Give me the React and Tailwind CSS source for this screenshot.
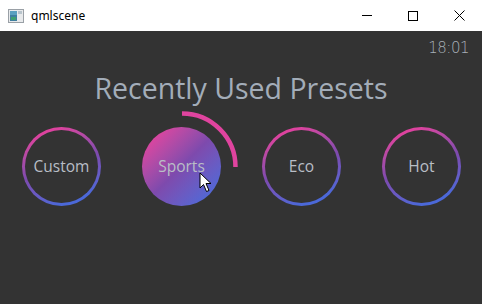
import React from 'react';

const presets = ['Custom', 'Sports', 'Eco', 'Hot'];

function AppIcon() {
  return (
    <svg width="16" height="14" viewBox="0 0 16 14">
      <rect x="0.5" y="0.5" width="15" height="13" fill="#e8eaec" stroke="#9aa0a6" />
      <rect x="2" y="2" width="7" height="10" fill="#3f7f9f" />
      <rect x="2" y="2" width="7" height="4" fill="#5aa0c0" />
      <rect x="3" y="8" width="5" height="3" fill="#3f9f6f" />
      <rect x="10" y="2" width="4" height="3" fill="#b8c4cc" />
    </svg>
  );
}

function Cursor() {
  return (
    <svg width="14" height="21" viewBox="0 0 14 21" className="absolute left-[199px] top-[141px]">
      <path d="M1 1 L1 16 L4.5 12.5 L7.5 19.5 L10 18.5 L7 11.5 L12 11.5 Z" fill="#ffffff" stroke="#000000" strokeWidth="1" strokeLinejoin="miter" />
    </svg>
  );
}

function Preset({ label, active }) {
  if (active) {
    return (
      <div className="relative w-[79px] h-[79px]">
        <div className="w-full h-full rounded-full bg-linear-135 from-[#e4429e] from-10% via-[#7e4aad] via-50% to-[#4a6ad9] to-90% flex items-center justify-center">
          <span className="text-[15.5px] text-[#b9bec6]">{label}</span>
        </div>
        <svg width="120" height="120" viewBox="0 0 120 120" className="absolute left-[-20.5px] top-[-20.5px] pointer-events-none">
          <path d="M60 6.5 A53.5 53.5 0 0 1 113.5 60" fill="none" stroke="#e0449f" strokeWidth="4.5" />
        </svg>
      </div>
    );
  }
  return (
    <div className="w-[79px] h-[79px] rounded-full bg-linear-160 from-[#e4409d] from-10% via-[#7d4aae] via-50% to-[#4b68d8] to-85% p-[3px]">
      <div className="w-full h-full rounded-full bg-[#333333] flex items-center justify-center">
        <span className="text-[15.5px] text-[#b9bec6]">{label}</span>
      </div>
    </div>
  );
}

export default function App() {
  return (
    <div className="w-[482px] h-[304px] flex flex-col font-['Open_Sans','Noto_Sans',sans-serif] overflow-hidden">
      <div className="h-[31px] bg-white flex items-center shrink-0">
        <div className="pl-[8px] pr-[7px] flex items-center">
          <AppIcon />
        </div>
        <span className="text-[12px] text-black font-['Noto_Sans',sans-serif]">qmlscene</span>
        <div className="ml-auto flex h-full">
          <div className="w-[46px] flex items-center justify-center">
            <div className="w-[10px] h-px bg-black" />
          </div>
          <div className="w-[46px] flex items-center justify-center">
            <div className="w-[10px] h-[10px] border border-black" />
          </div>
          <div className="w-[46px] flex items-center justify-center">
            <svg width="11" height="11" viewBox="0 0 11 11">
              <path d="M0.5 0.5 L10.5 10.5 M10.5 0.5 L0.5 10.5" stroke="#000" strokeWidth="1" />
            </svg>
          </div>
        </div>
      </div>
      <div className="relative flex-1 bg-[#333333] flex flex-col">
        <div className="flex justify-end pr-[13px] pt-[8px] h-[24px]">
          <span className="text-[15px] leading-[18px] text-[#a8b0b8] font-['DejaVu_Sans',sans-serif] font-light tracking-[-0.5px]">18:01</span>
        </div>
        <div className="flex justify-center mt-[16px]">
          <span className="text-[28.5px] leading-[34px] text-[#a3adb9]">Recently Used Presets</span>
        </div>
        <div className="flex gap-[41px] pl-[22px] mt-[22px]">
          {presets.map((p) => (
            <Preset key={p} label={p} active={p === 'Sports'} />
          ))}
        </div>
        <Cursor />
      </div>
    </div>
  );
}
